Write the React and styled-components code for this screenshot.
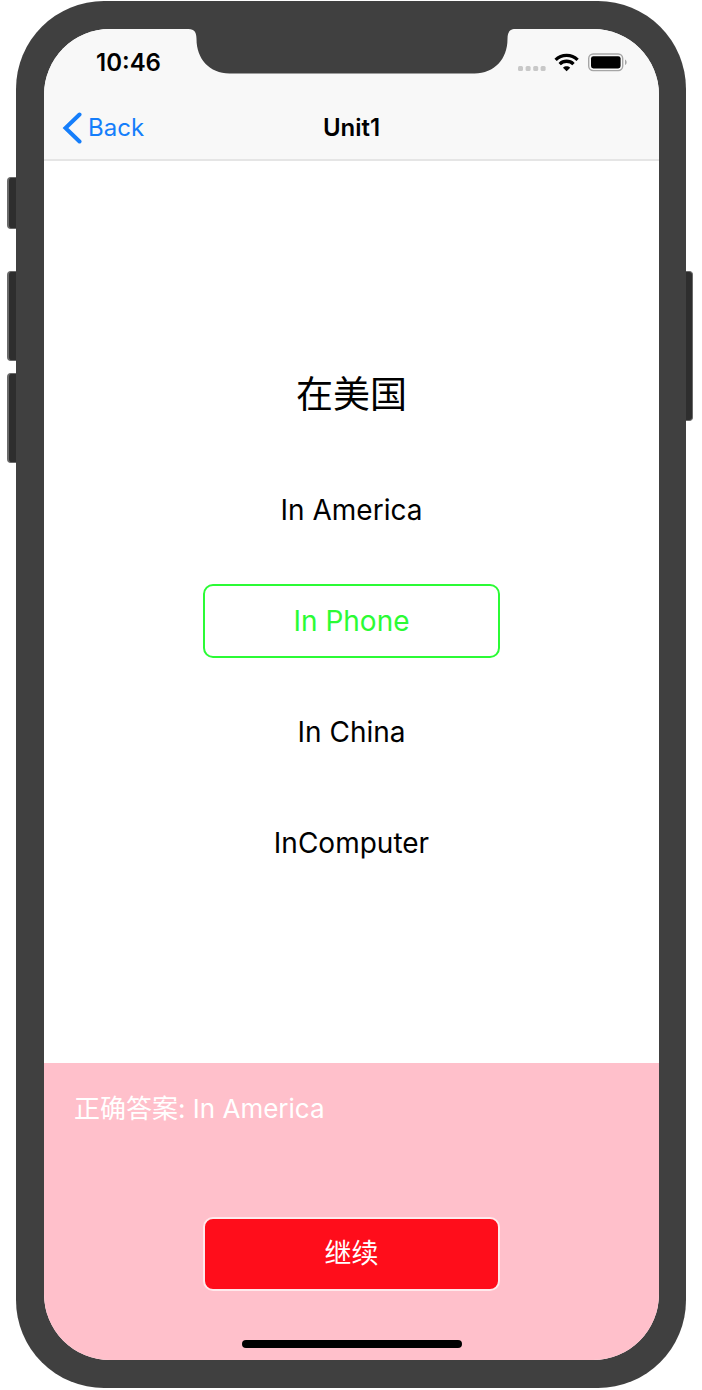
import React, { useState } from "react";
import styled, { createGlobalStyle, css } from "styled-components";

const GlobalStyle = createGlobalStyle`
  *, *::before, *::after { box-sizing: border-box; }
  body {
    margin: 0;
    background: #fff;
    color: #000;
    font-family: Inter, "Noto Sans CJK SC", sans-serif;
  }
  button { font-family: inherit; }
`;

const Stage = styled.div`
  display: flex;
  min-height: 100vh;
  padding: 1px 9px 2px 7px;
`;

const Rail = styled.div`
  display: flex;
  flex-direction: column;
  flex: none;
  width: ${(p) => (p.$side === "left" ? 9 : 7)}px;
  padding-top: ${(p) => (p.$side === "left" ? 176 : 270)}px;
`;

const HardwareKey = styled.span`
  height: ${(p) => p.$height}px;
  margin-bottom: ${(p) => p.$after || 0}px;
  background: #2e2e2e;
  border: 1px solid #6a6a6a;
  ${(p) =>
    p.$side === "left"
      ? css`
          border-right: 0;
          border-left-width: 2px;
          border-radius: 4px 0 0 4px;
        `
      : css`
          border-left: 0;
          border-radius: 0 4px 4px 0;
        `}
`;

const Device = styled.div`
  display: flex;
  flex: 1;
  min-width: 0;
  padding: 28px 27px 28px 28px;
  background: #404040;
  border-radius: 88px;
`;

const Screen = styled.div`
  display: flex;
  flex-direction: column;
  flex: 1;
  min-width: 0;
  overflow: hidden;
  background: #fff;
  border-radius: 66px;
`;

const Header = styled.header`
  position: relative;
  background: #f8f8f8;
  border-bottom: 2px solid #e5e5e5;
`;

const Notch = styled.svg`
  position: absolute;
  top: 0;
  left: 50%;
  transform: translateX(-50%);
`;

const StatusBar = styled.div`
  display: flex;
  align-items: center;
  justify-content: space-between;
  height: 68px;
  padding: 0 32px 0 52px;
`;

const Time = styled.span`
  font-size: 24px;
  line-height: 28px;
  font-weight: 600;
`;

const StatusIcons = styled.div`
  display: flex;
  align-items: center;
`;

const NavBar = styled.nav`
  display: grid;
  grid-template-columns: 1fr auto 1fr;
  align-items: center;
  height: 62px;
  padding: 0 18px;
`;

const BackButton = styled.button`
  display: flex;
  align-items: center;
  justify-self: start;
  gap: 5px;
  padding: 0;
  border: 0;
  background: none;
  color: #157efb;
  font-size: 24px;
  line-height: 32px;
`;

const Title = styled.h1`
  margin: 0;
  font-size: 24px;
  line-height: 32px;
  font-weight: 600;
`;

const Quiz = styled.main`
  display: flex;
  flex-direction: column;
  align-items: center;
  flex: 1;
  padding: 206px 24px 48px;
`;

const Question = styled.h2`
  margin: 0 0 50px;
  font-size: 37px;
  line-height: 56px;
  font-weight: 400;
`;

const Options = styled.div`
  display: flex;
  flex-direction: column;
  align-items: center;
  gap: 37px;
  width: 100%;
`;

const Button = styled.button`
  width: 297px;
  max-width: 100%;
  height: 74px;
  padding: 0;
  border: 2px solid transparent;
  border-radius: 10px;
  background: transparent;
`;

const OptionButton = styled(Button)`
  color: ${(p) => (p.$selected ? "#2bfb35" : "#000")};
  border-color: ${(p) => (p.$selected ? "#2bfb35" : "transparent")};
  font-size: 28px;
  line-height: 36px;
`;

const Feedback = styled.section`
  display: flex;
  flex-direction: column;
  align-items: center;
  padding: 26px 30px 12px;
  background: #ffc0cb;
  color: #fff;
`;

const Answer = styled.p`
  align-self: stretch;
  margin: 0 0 88px;
  font-size: 26px;
  line-height: 40px;
`;

const ContinueButton = styled(Button)`
  background: #ff0d1b;
  border-color: #ffe9ec;
  color: #fff;
  font-size: 27px;
  line-height: 40px;
`;

const HomeIndicator = styled.span`
  width: 220px;
  height: 8px;
  margin-top: 49px;
  border-radius: 4px;
  background: #000;
`;

const choices = ["In America", "In Phone", "In China", "InComputer"];

function StatusGlyphs() {
  return (
    <StatusIcons>
      <svg width="109" height="20" viewBox="0 0 109 20" aria-hidden="true">
        <g fill="#c8c8c8">
          <rect x="0" y="13" width="5" height="5" rx="1.5" />
          <rect x="7.6" y="13" width="5" height="5" rx="1.5" />
          <rect x="15.2" y="13" width="5" height="5" rx="1.5" />
          <rect x="22.6" y="13" width="5" height="5" rx="1.5" />
        </g>
        <g fill="none" stroke="#000" strokeWidth="3.3">
          <path d="M37.6 6.9 A15.6 15.6 0 0 1 59.6 6.9" />
          <path d="M41.7 11.1 A9.8 9.8 0 0 1 55.5 11.1" />
        </g>
        <path
          fill="#000"
          d="M48.6 18.3 L45 14.7 C47 12.8 50.2 12.8 52.2 14.7 Z"
        />
        <rect x="70.7" y="1" width="34" height="16.6" rx="4.5" fill="none" stroke="#a6a6a6" strokeWidth="1.4" />
        <rect x="73" y="3.2" width="29.6" height="12.3" rx="2.4" fill="#000" />
        <path d="M107 6.5 C109.2 7.4 109.2 11.2 107 12.1 Z" fill="#a6a6a6" />
      </svg>
    </StatusIcons>
  );
}

export default function App() {
  const [selected, setSelected] = useState("In Phone");

  return (
    <>
      <GlobalStyle />
      <Stage>
        <Rail $side="left">
          <HardwareKey $side="left" $height={52} $after={42} />
          <HardwareKey $side="left" $height={90} $after={12} />
          <HardwareKey $side="left" $height={90} />
        </Rail>
        <Device>
          <Screen>
            <Header>
              <Notch width="331" height="45" viewBox="0 0 331 45" aria-hidden="true">
                <path
                  fill="#404040"
                  d="M2 0 C8 0 10 3.5 10 10 C10 30 23 44.4 43 44.4 H288 C308 44.4 321 30 321 10 C321 3.5 323 0 329 0 Z"
                />
              </Notch>
              <StatusBar>
                <Time>10:46</Time>
                <StatusGlyphs />
              </StatusBar>
              <NavBar>
                <BackButton type="button">
                  <svg width="21" height="32" viewBox="0 0 21 32" aria-hidden="true">
                    <path
                      d="M17.5 2.5 L3.5 16 L17.5 29.5"
                      fill="none"
                      stroke="currentColor"
                      strokeWidth="4"
                      strokeLinecap="round"
                      strokeLinejoin="miter"
                    />
                  </svg>
                  Back
                </BackButton>
                <Title>Unit1</Title>
              </NavBar>
            </Header>
            <Quiz>
              <Question>在美国</Question>
              <Options>
                {choices.map((choice) => (
                  <OptionButton
                    key={choice}
                    type="button"
                    $selected={choice === selected}
                    aria-pressed={choice === selected}
                    onClick={() => setSelected(choice)}
                  >
                    {choice}
                  </OptionButton>
                ))}
              </Options>
            </Quiz>
            <Feedback>
              <Answer>正确答案: In America</Answer>
              <ContinueButton type="button">继续</ContinueButton>
              <HomeIndicator />
            </Feedback>
          </Screen>
        </Device>
        <Rail $side="right">
          <HardwareKey $side="right" $height={150} />
        </Rail>
      </Stage>
    </>
  );
}
